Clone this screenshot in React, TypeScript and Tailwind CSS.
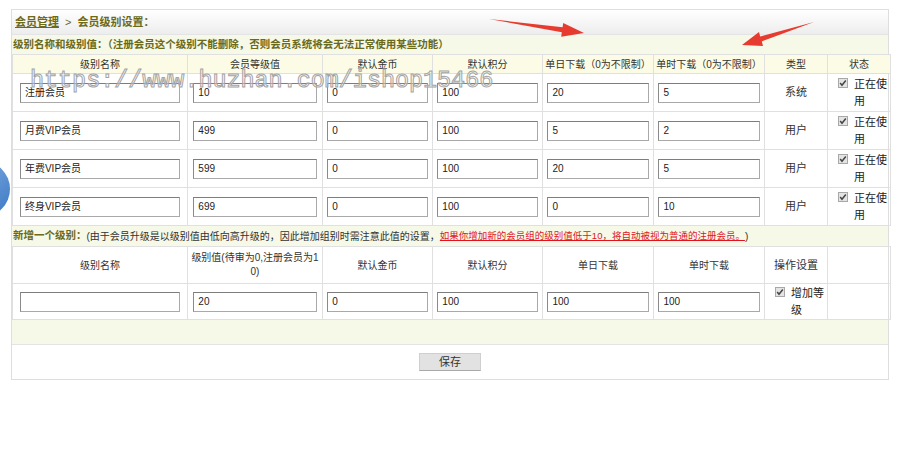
import React from 'react';

const font = "font-['Liberation_Sans','Noto_Sans_CJK_SC',sans-serif]";

const cols = [175, 135, 110, 110, 111, 111, 63, 63];

interface Level {
  name: string;
  value: string;
  gold: string;
  score: string;
  day: string;
  hour: string;
  type: string;
}

const levels: Level[] = [
  { name: '注册会员', value: '10', gold: '0', score: '100', day: '20', hour: '5', type: '系统' },
  { name: '月费VIP会员', value: '499', gold: '0', score: '100', day: '5', hour: '2', type: '用户' },
  { name: '年费VIP会员', value: '599', gold: '0', score: '100', day: '20', hour: '5', type: '用户' },
  { name: '终身VIP会员', value: '699', gold: '0', score: '100', day: '0', hour: '10', type: '用户' },
];

const ColGroup = () => (
  <colgroup>
    {cols.map((w, i) => (
      <col key={i} style={{ width: w }} />
    ))}
  </colgroup>
);

const TextBox = ({ value }: { value: string }) => (
  <div className="mx-auto flex h-[20px] w-[92%] items-center border border-[#a9a9a9] border-t-[#7d7d7d] border-l-[#8a8a8a] bg-white pl-[4px] text-[10px] text-[#222]">
    {value}
  </div>
);

const Check = () => (
  <svg width="10" height="10" viewBox="0 0 10 10" className="mt-[2px] shrink-0">
    <rect x="0.5" y="0.5" width="9" height="9" fill="#e4e4e4" stroke="#a8a8a8" />
    <path d="M2.2 5 L4 7.2 L7.8 2.6" fill="none" stroke="#444" strokeWidth="1.5" />
  </svg>
);

const CheckLabel = ({ text, rest }: { text: string; rest: string }) => (
  <div className="flex items-start gap-[6px] pl-[10px] leading-[17px]">
    <Check />
    <span className="text-[11px] text-[#222]">
      {text}
      <br />
      {rest}
    </span>
  </div>
);

const td = 'border border-[#e0e0e0] p-0 align-middle';

const App = () => {
  return (
    <div className={`relative h-[457px] w-[900px] overflow-hidden bg-white ${font}`}>
      <div className="pl-[11px] pt-[9px]">
        <div className="w-[878px] border border-[#dedede]">
          {/* title */}
          <div className="flex h-[24px] items-center bg-gradient-to-b from-white to-[#ededed] pl-[3px] text-[11px] font-bold text-[#6b6a1a]">
            <span className="underline">会员管理</span>
            <span className="mx-[6px] font-normal">&gt;</span>
            <span>会员级别设置：</span>
          </div>
          <div className="flex h-[20px] items-center border-t border-[#e4e4e4] bg-[#f6f8e8] pl-[1px] text-[10.5px] font-bold text-[#6b6a1a]">
            级别名称和级别值：（注册会员这个级别不能删除，否则会员系统将会无法正常使用某些功能）
          </div>

          <table className="w-[878px] table-fixed border-collapse text-[10px] text-[#333]">
            <ColGroup />
            <tbody>
              <tr className="h-[19px] bg-[#fcfce6] text-center">
                <td className={td}>级别名称</td>
                <td className={td}>会员等级值</td>
                <td className={td}>默认金币</td>
                <td className={td}>默认积分</td>
                <td className={td}>单日下载（0为不限制）</td>
                <td className={td}>单时下载（0为不限制）</td>
                <td className={td}>类型</td>
                <td className={td}>状态</td>
              </tr>
              {levels.map((lv) => (
                <tr key={lv.name} className="h-[38px]">
                  <td className={td}>
                    <TextBox value={lv.name} />
                  </td>
                  <td className={td}>
                    <TextBox value={lv.value} />
                  </td>
                  <td className={td}>
                    <TextBox value={lv.gold} />
                  </td>
                  <td className={td}>
                    <TextBox value={lv.score} />
                  </td>
                  <td className={td}>
                    <TextBox value={lv.day} />
                  </td>
                  <td className={td}>
                    <TextBox value={lv.hour} />
                  </td>
                  <td className={`${td} text-center text-[11px]`}>{lv.type}</td>
                  <td className={td}>
                    <CheckLabel text="正在使" rest="用" />
                  </td>
                </tr>
              ))}
            </tbody>
          </table>

          <div className="flex h-[20px] items-center bg-[#f6f8e8] pl-[1px] text-[10px] text-[#333]">
            <span className="text-[10.5px] font-bold text-[#6b6a1a]">新增一个级别：</span>
            <span>(由于会员升级是以级别值由低向高升级的，因此增加组别时需注意此值的设置，</span>
            <span className="text-[9.5px] text-[#e0141e] underline">
              如果你增加新的会员组的级别值低于10，将自动被视为普通的注册会员。
            </span>
            <span>)</span>
          </div>

          <table className="w-[878px] table-fixed border-collapse text-[10px] text-[#333]">
            <ColGroup />
            <tbody>
              <tr className="h-[37px] text-center">
                <td className={td}>级别名称</td>
                <td className={`${td} leading-[14px]`}>
                  级别值(待审为0,注册会员为1
                  <br />
                  0)
                </td>
                <td className={td}>默认金币</td>
                <td className={td}>默认积分</td>
                <td className={td}>单日下载</td>
                <td className={td}>单时下载</td>
                <td className={`${td} text-[11px]`}>操作设置</td>
                <td className={td}></td>
              </tr>
              <tr className="h-[36px]">
                <td className={td}>
                  <TextBox value="" />
                </td>
                <td className={td}>
                  <TextBox value="20" />
                </td>
                <td className={td}>
                  <TextBox value="0" />
                </td>
                <td className={td}>
                  <TextBox value="100" />
                </td>
                <td className={td}>
                  <TextBox value="100" />
                </td>
                <td className={td}>
                  <TextBox value="100" />
                </td>
                <td className={td}>
                  <CheckLabel text="增加等" rest="级" />
                </td>
                <td className={td}></td>
              </tr>
            </tbody>
          </table>

          <div className="h-[25px] border-b border-[#e4e4e4] bg-[#f6f8e8]" />
          <div className="flex h-[34px] items-center justify-center">
            <button className="h-[18px] w-[62px] border border-[#cfcfcf] border-b-[#a8a8a8] bg-[#e2e2e2] text-[11px] text-[#333]">
              保存
            </button>
          </div>
        </div>
      </div>

      {/* watermark */}
      <div className="pointer-events-none absolute left-[30px] top-[70px] font-['Liberation_Mono',monospace] text-[23.4px] leading-none text-[rgba(255,255,255,0.4)] [-webkit-text-stroke:1px_#a3a3a3]">
        https://www.huzhan.com/ishop15466
      </div>

      {/* blue disc on the left edge */}
      <div className="pointer-events-none absolute left-[-46px] top-[161px] h-[56px] w-[56px] rounded-full bg-gradient-to-br from-[#8fb8e6] to-[#3a78c4]" />

      {/* red arrows */}
      <svg className="pointer-events-none absolute left-0 top-0" width="900" height="457">
        <polygon
          points="489,19 562.6,27.3 563.2,22.9 584,33 561.2,36.7 561.8,32.3"
          fill="#e63b2e"
        />
        <polygon
          points="814,22 760.2,36.6 759,32 742,45 763,46 761.8,41.4"
          fill="#e63b2e"
        />
      </svg>
    </div>
  );
};

export default App;
